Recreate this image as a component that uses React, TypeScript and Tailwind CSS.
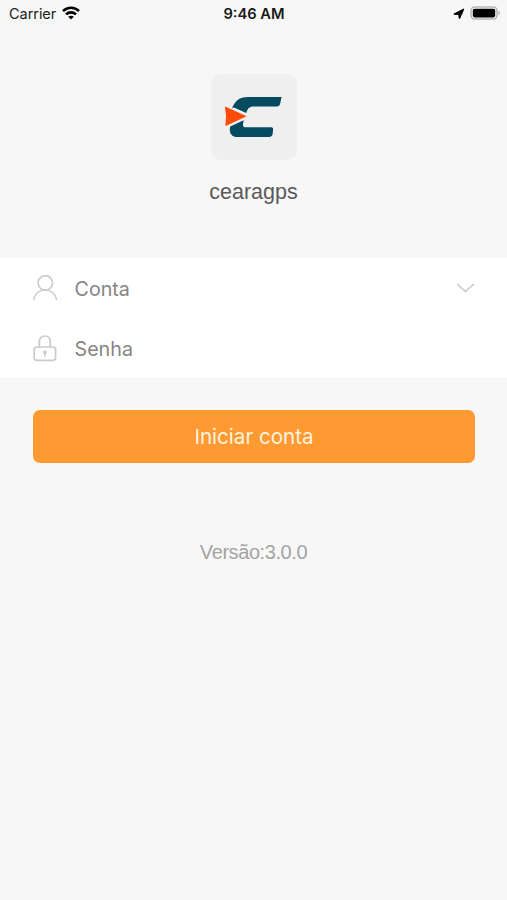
import type { ReactNode } from 'react';

function StatusBar() {
  return (
    <header className="grid h-7 grid-cols-3 items-center pl-[9px] pr-[6px] text-black">
      <div className="flex items-center gap-[6px]">
        <span className="text-[14.5px] leading-7 tracking-[-0.05px] text-[#222]">Carrier</span>
        <svg className="-mt-[3px]" width="18" height="14" viewBox="0 0 18 14" fill="none" stroke="currentColor" strokeWidth="2.6">
          <path d="M1 5.1C5.5.7 12.5.7 17 5.1" />
          <path d="M4 8.4c2.8-2.7 7.2-2.7 10 0" />
          <path d="M9 13.6 6.2 10.8c1.6-1.5 4-1.5 5.6 0z" fill="currentColor" stroke="none" />
        </svg>
      </div>
      <span className="pr-[2px] text-center text-[14.7px] font-semibold leading-7 text-[#181818]">9:46 AM</span>
      <div className="flex items-center justify-end gap-[5px]">
        <svg width="12" height="12" viewBox="0 0 12 12" fill="currentColor" stroke="currentColor" strokeWidth="1.4" strokeLinejoin="round">
          <path d="M10.5 1.3 6.5 10.2 5.8 6.3 1.3 6z" />
        </svg>
        <svg className="-mt-[2px]" width="31" height="14" viewBox="0 0 31 14">
          <rect x="1" y="1" width="26" height="12" rx="3.8" fill="#f7f7f7" stroke="#b8b8b8" strokeWidth="1.6" />
          <rect x="2.8" y="2.8" width="22.4" height="8.6" rx="1.8" fill="#000" />
          <path d="M28.5 4.8c2 .8 2 3.6 0 4.4z" fill="#b0b0b0" />
        </svg>
      </div>
    </header>
  );
}

function Logo() {
  return (
    <div className="ml-px size-[86px] rounded-[10px] bg-[#efefef]">
      <svg width="86" height="86" viewBox="0 0 86 86">
        <path
          d="M21 34.2C24.5 26.5 28.5 22.9 36.5 22.9H70.6L69 30.3Q68.5 32.4 66.3 32.4H42.5C38.5 32.4 36.5 34.5 35.2 38.9L23 33.4z"
          fill="#064a60"
        />
        <path
          d="M19.2 52.4 32.7 46.3 32 50.2Q31.5 53.3 35 53.3H60.4Q62.3 53.3 62.1 55.2L61.7 59.5Q61.3 62.9 58 62.9H26.5C20.3 62.9 17.8 58.8 19.2 52.4z"
          fill="#064a60"
        />
        <path
          d="M14.6 33.4 34.3 42.3 15 51.2Q16.6 42.3 14.6 33.4z"
          fill="#ff4b0a"
          stroke="#ff4b0a"
          strokeWidth="1.2"
          strokeLinejoin="round"
        />
      </svg>
    </div>
  );
}

function UserIcon() {
  return (
    <svg width="26" height="27" viewBox="0 0 26 27" fill="none" stroke="#cbcbcb" strokeWidth="1.7" strokeLinecap="round">
      <circle cx="12.3" cy="7.9" r="7.2" />
      <path d="M.9 24.4C1.8 18.7 6 15 12 15S22.4 18.7 23.5 24.4" />
    </svg>
  );
}

function LockIcon() {
  return (
    <svg width="26" height="27" viewBox="0 0 26 27" fill="none" stroke="#cbcbcb" strokeWidth="1.7" strokeLinecap="round">
      <rect x="1.2" y="12" width="21.4" height="13.4" rx="2.6" />
      <path d="M6.4 12V6.6C6.4 3 8.8 1 11.8 1s5.4 2 5.4 5.6V12" />
      <circle cx="11.9" cy="17.4" r="1" fill="#b8b8b8" />
      <path d="M11.9 18v2.8" />
    </svg>
  );
}

function Field({ icon, label, children }: { icon: ReactNode; label: string; children?: ReactNode }) {
  return (
    <div className="flex h-[60px] items-center pl-[33px] pr-8">
      {icon}
      <span className="ml-[15.5px] flex-1 pt-[3px] text-[19.7px] text-[#858585]">{label}</span>
      {children}
    </div>
  );
}

export default function App() {
  return (
    <div className="flex h-[900px] w-full flex-col bg-[#f7f7f7] font-['Inter','Liberation_Sans',sans-serif]">
      <StatusBar />

      <div className="flex h-[230px] flex-col items-center pt-[46px]">
        <Logo />
        <h1 className="mt-[16px] font-['Liberation_Sans',sans-serif] text-[21.5px] leading-8 text-[#5a5a5a]">cearagps</h1>
      </div>

      <div className="h-[120px] bg-white">
        <Field icon={<UserIcon />} label="Conta">
          <svg width="19" height="10" viewBox="0 0 19 10" fill="none" stroke="#c8c8c8" strokeWidth="1.6">
            <path d="m1 1 8.5 7.5L18 1" />
          </svg>
        </Field>
        <Field icon={<LockIcon />} label="Senha" />
      </div>

      <div className="px-8 pt-[32px]">
        <button className="ml-[1px] h-[53px] w-[442px] rounded-[7px] bg-[#ff9a33] pt-[2px] text-[20.6px] text-[#fff3df]">
          Iniciar conta
        </button>
      </div>

      <p className="mt-[73px] text-center font-['Liberation_Sans',sans-serif] text-[20px] leading-8 tracking-[-0.42px] text-[#a4a4a4]">
        Versão:3.0.0
      </p>
    </div>
  );
}
